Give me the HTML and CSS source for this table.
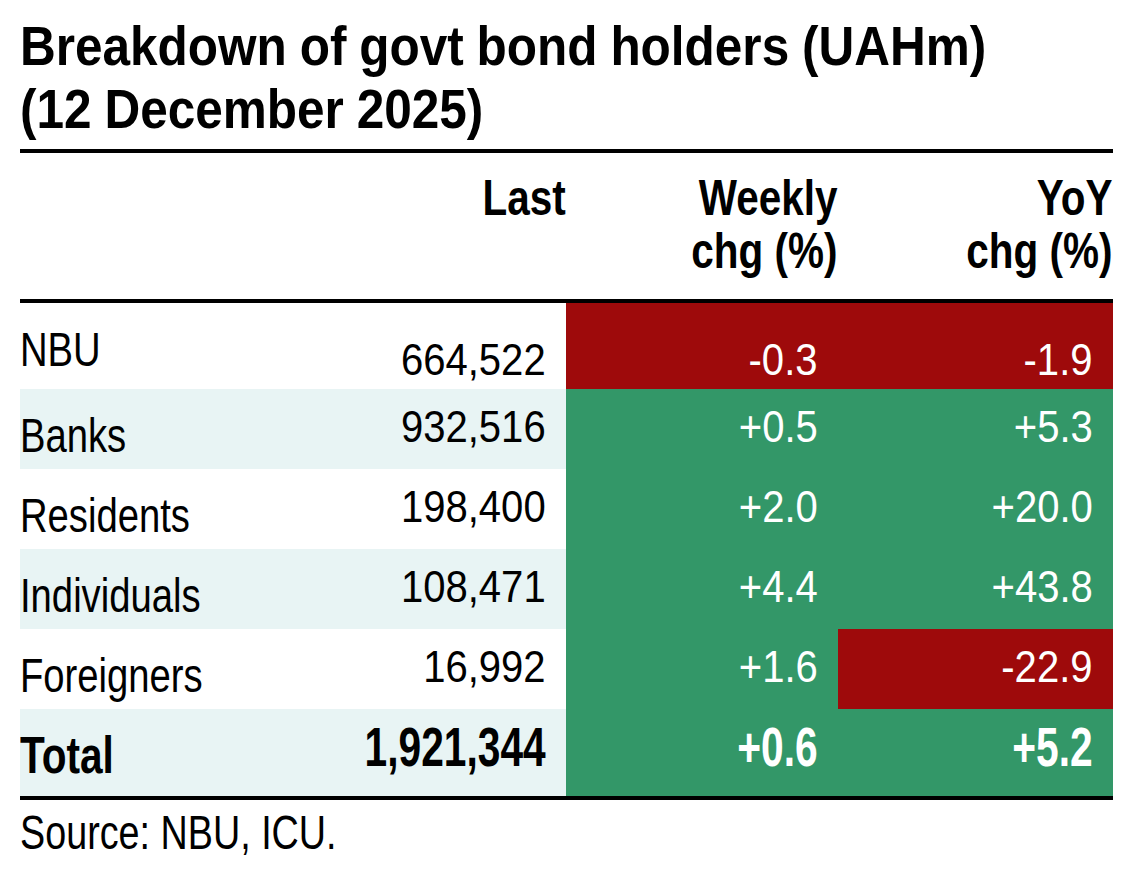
FILE: index.html
```html
<!DOCTYPE html>
<html>
<head>
<meta charset="utf-8">
<link rel="stylesheet" href="styles.css">
</head>
<body>
<div class="wrap">
  <h1 class="title"><span class="t">Breakdown of govt bond holders (UAHm)<br>(12 December 2025)</span></h1>
  <div class="table">
    <div class="row head">
      <div class="cell lbl"></div>
      <div class="cell hd"><span class="t">Last</span></div>
      <div class="cell hd"><span class="t">Weekly<br>chg (%)</span></div>
      <div class="cell hd"><span class="t">YoY<br>chg (%)</span></div>
    </div>
    <div class="row first">
      <div class="cell lbl"><span class="t">NBU</span></div>
      <div class="cell num"><span class="t">664,522</span></div>
      <div class="cell num neg"><span class="t">-0.3</span></div>
      <div class="cell num neg"><span class="t">-1.9</span></div>
    </div>
    <div class="row alt">
      <div class="cell lbl"><span class="t">Banks</span></div>
      <div class="cell num"><span class="t">932,516</span></div>
      <div class="cell num pos"><span class="t">+0.5</span></div>
      <div class="cell num pos"><span class="t">+5.3</span></div>
    </div>
    <div class="row">
      <div class="cell lbl"><span class="t">Residents</span></div>
      <div class="cell num"><span class="t">198,400</span></div>
      <div class="cell num pos"><span class="t">+2.0</span></div>
      <div class="cell num pos"><span class="t">+20.0</span></div>
    </div>
    <div class="row alt">
      <div class="cell lbl"><span class="t">Individuals</span></div>
      <div class="cell num"><span class="t">108,471</span></div>
      <div class="cell num pos"><span class="t">+4.4</span></div>
      <div class="cell num pos"><span class="t">+43.8</span></div>
    </div>
    <div class="row">
      <div class="cell lbl"><span class="t">Foreigners</span></div>
      <div class="cell num"><span class="t">16,992</span></div>
      <div class="cell num pos"><span class="t">+1.6</span></div>
      <div class="cell num neg"><span class="t">-22.9</span></div>
    </div>
    <div class="row alt total">
      <div class="cell lbl"><span class="t">Total</span></div>
      <div class="cell num"><span class="t">1,921,344</span></div>
      <div class="cell num pos"><span class="t">+0.6</span></div>
      <div class="cell num pos"><span class="t">+5.2</span></div>
    </div>
  </div>
  <p class="source"><span class="t">Source: NBU, ICU.</span></p>
</div>
</body>
</html>
```
FILE: styles.css
```css
html, body {
  margin: 0;
  padding: 0;
  background: #ffffff;
}
body {
  font-family: "Liberation Sans", Arial, Helvetica, sans-serif;
  color: #000;
}
.wrap {
  margin-left: 20px;
  width: 1093px;
}
.t {
  display: inline-block;
  white-space: nowrap;
}
.title {
  margin: 0;
  padding-top: 15px;
  font-size: 55px;
  line-height: 63px;
  font-weight: bold;
}
.title .t {
  transform: scaleX(0.9);
  transform-origin: left center;
  word-spacing: -1px;
}
.table {
  margin-top: 8px;
  border-top: 4px solid #000;
  border-bottom: 4px solid #000;
}
.row {
  display: grid;
  grid-template-columns: 360px 186px 272px 275px;
  height: 80px;
}
.row.head {
  height: 146px;
  border-bottom: 4px solid #000;
}
.row.first { height: 86px; }
.row.total { height: 87px; }
.row.alt .lbl,
.row.alt .cell:nth-child(2) { background: #e8f4f4; }
.cell {
  display: flex;
  justify-content: flex-end;
  align-items: flex-start;
  text-align: right;
  min-width: 0;
}
.cell .t {
  flex: none;
  transform-origin: right center;
}
.lbl {
  justify-content: flex-start;
  text-align: left;
  font-size: 49px;
  line-height: 49px;
  padding-top: 22px;
}
.lbl .t {
  transform-origin: left center;
  transform: scaleX(0.78);
}
.hd {
  font-weight: bold;
  font-size: 50px;
  line-height: 53px;
  padding-top: 19px;
}
.hd .t {
  transform: scaleX(0.81);
}
.num {
  font-size: 45px;
  line-height: 45px;
  padding-top: 15px;
  padding-right: 20px;
}
.num .t {
  transform: scaleX(0.89);
}
.row.first .num { padding-top: 34px; }
.row.total .lbl {
  font-weight: bold;
  font-size: 52px;
  line-height: 52px;
  padding-top: 20px;
}
.row.total .num {
  font-weight: bold;
  font-size: 55px;
  line-height: 55px;
  padding-top: 11px;
}
.row.total .num .t {
  transform: scaleX(0.74);
}
.neg { background: #9e0a0b; color: #fff; }
.pos { background: #339768; color: #fff; }
.source {
  margin: 8px 0 0;
  font-size: 49px;
  line-height: 49px;
}
.source .t {
  transform: scaleX(0.77);
  transform-origin: left center;
}
```
